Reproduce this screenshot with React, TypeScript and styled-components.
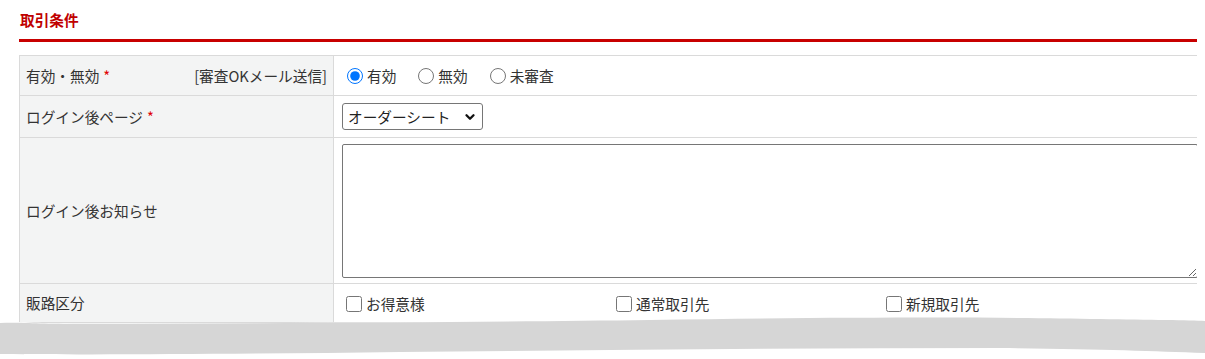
import styled, { createGlobalStyle } from "styled-components";
import { ChevronDown } from "lucide-react";

const GlobalStyle = createGlobalStyle`
  html, body {
    margin: 0;
    padding: 0;
    background: #fff;
  }
  body {
    font-family: "Noto Sans CJK JP", "Noto Sans", "Liberation Sans", sans-serif;
    font-size: 14.67px;
    color: #333;
  }
`;

const Page = styled.div`
  position: relative;
  width: 1205px;
  height: 359px;
  overflow: hidden;
  padding: 0 8px 0 19px;
  box-sizing: border-box;
`;

const SectionTitle = styled.h2`
  margin: 0;
  padding-top: 10px;
  height: 39px;
  box-sizing: border-box;
  font-size: 14.67px;
  font-weight: bold;
  color: #c00000;
  line-height: 20px;
  padding-left: 1px;
`;

const TitleRule = styled.div`
  height: 3px;
  background: #c80000;
  margin-bottom: 13px;
`;

const TableClip = styled.div`
  width: 1178px;
  overflow: hidden;
`;

const FormTable = styled.table`
  width: 1200px;
  border-collapse: collapse;
  table-layout: fixed;
`;

const LabelCell = styled.th`
  width: 314px;
  box-sizing: border-box;
  background: #f3f4f4;
  border: 1px solid #dadada;
  padding: 0 6px;
  text-align: left;
  font-weight: normal;
  vertical-align: middle;
  line-height: 20px;
`;

const LabelRow = styled.div`
  display: flex;
  justify-content: space-between;
  align-items: center;
`;

const Required = styled.span`
  color: #e00000;
  margin-left: 4px;
`;

const ValueCell = styled.td<{ $h: number }>`
  height: ${(p) => p.$h}px;
  border: 1px solid #dadada;
  padding: 0 8px;
  vertical-align: middle;
  line-height: 20px;
`;

const RadioGroup = styled.div`
  display: flex;
  gap: 17px;
  align-items: center;
`;

const Choice = styled.label`
  display: inline-flex;
  align-items: center;
  input {
    width: 16px;
    height: 16px;
    margin: 0 4px 0 5px;
    accent-color: #0075ff;
  }
`;

const CheckChoice = styled(Choice)`
  input {
    margin: 0 4px 0 4px;
  }
`;

const SelectWrap = styled.div`
  position: relative;
  display: inline-block;
  width: 141px;
  height: 27px;
  svg {
    position: absolute;
    right: 6px;
    top: 7px;
    pointer-events: none;
  }
`;

const Select = styled.select`
  appearance: none;
  width: 141px;
  height: 27px;
  box-sizing: border-box;
  border: 1px solid #767676;
  border-radius: 3px;
  background: #fff;
  font: inherit;
  color: #222;
  padding: 0 0 0 5px;
  display: block;
`;

const Notice = styled.textarea`
  display: block;
  width: 856px;
  height: 134px;
  box-sizing: border-box;
  border: 1px solid #767676;
  border-radius: 2px;
  margin: 0;
  resize: both;
  font: inherit;
`;

const CheckGrid = styled.div`
  display: grid;
  grid-template-columns: repeat(3, 270px);
  align-items: center;
  padding-top: 2px;
`;

const TornEdge = styled.svg`
  position: absolute;
  left: 0;
  top: 313px;
  width: 1205px;
  height: 46px;
  pointer-events: none;
`;

export default function App() {
  return (
    <Page>
      <GlobalStyle />
      <SectionTitle>取引条件</SectionTitle>
      <TitleRule />
      <TableClip>
        <FormTable>
          <tbody>
            <tr>
              <LabelCell>
                <LabelRow>
                  <span>
                    有効・無効<Required>*</Required>
                  </span>
                  <span>[審査OKメール送信]</span>
                </LabelRow>
              </LabelCell>
              <ValueCell $h={39}>
                <RadioGroup>
                  <Choice>
                    <input type="radio" name="status" defaultChecked />
                    有効
                  </Choice>
                  <Choice>
                    <input type="radio" name="status" />
                    無効
                  </Choice>
                  <Choice>
                    <input type="radio" name="status" />
                    未審査
                  </Choice>
                </RadioGroup>
              </ValueCell>
            </tr>
            <tr>
              <LabelCell>
                ログイン後ページ<Required>*</Required>
              </LabelCell>
              <ValueCell $h={41}>
                <SelectWrap>
                  <Select defaultValue="order">
                    <option value="order">オーダーシート</option>
                  </Select>
                  <ChevronDown size={14} strokeWidth={4} color="#111" />
                </SelectWrap>
              </ValueCell>
            </tr>
            <tr>
              <LabelCell>ログイン後お知らせ</LabelCell>
              <ValueCell $h={145}>
                <Notice />
              </ValueCell>
            </tr>
            <tr>
              <LabelCell>販路区分</LabelCell>
              <ValueCell $h={38}>
                <CheckGrid>
                  <CheckChoice>
                    <input type="checkbox" />
                    お得意様
                  </CheckChoice>
                  <CheckChoice>
                    <input type="checkbox" />
                    通常取引先
                  </CheckChoice>
                  <CheckChoice>
                    <input type="checkbox" />
                    新規取引先
                  </CheckChoice>
                </CheckGrid>
              </ValueCell>
            </tr>
            <tr>
              <LabelCell>&nbsp;</LabelCell>
              <ValueCell $h={38} />
            </tr>
          </tbody>
        </FormTable>
      </TableClip>
      <TornEdge viewBox="0 0 1205 46" preserveAspectRatio="none">
        <path
          d="M0 9 C 20 8, 40 11, 80 11 C 300 10, 500 9, 650 7 C 850 4, 1000 3, 1100 5 C 1150 6, 1190 7, 1205 7 L 1205 46 L 0 46 Z"
          fill="#fff"
        />
        <path
          d="M0 10 C 20 9, 40 11, 80 11 C 300 10, 500 9, 650 7 C 850 4, 1000 4, 1100 6 C 1150 7, 1190 7, 1205 8 L 1205 40 C 1150 38, 1100 36, 1000 35 C 800 35, 600 37, 400 39 C 250 41, 100 42, 0 41 Z"
          fill="#d6d6d6"
        />
      </TornEdge>
    </Page>
  );
}
